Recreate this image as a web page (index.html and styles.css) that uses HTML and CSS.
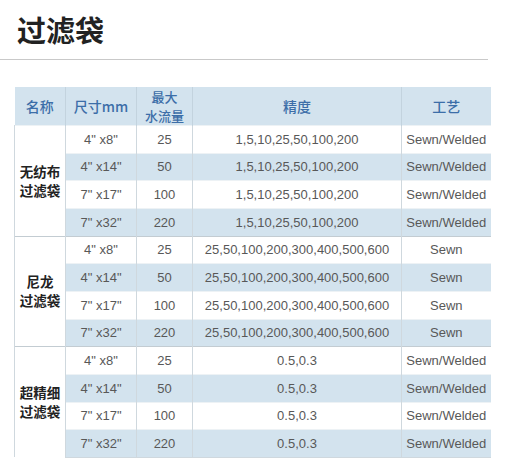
FILE: index.html
```html
<!DOCTYPE html>
<html lang="zh">
<head>
<meta charset="utf-8">
<link rel="stylesheet" href="styles.css">
</head>
<body>
<h1 class="title">过滤袋</h1>
<hr class="rule">
<table class="spec">
  <colgroup>
    <col class="c1"><col class="c2"><col class="c3"><col class="c4"><col class="c5">
  </colgroup>
  <thead>
    <tr><th>名称</th><th>尺寸mm</th><th class="two">最大<br>水流量</th><th>精度</th><th>工艺</th></tr>
  </thead>
  <tbody class="grp">
    <tr><td class="name" rowspan="4">无纺布<br>过滤袋</td><td>4" x8"</td><td>25</td><td>1,5,10,25,50,100,200</td><td>Sewn/Welded</td></tr>
    <tr class="alt"><td>4" x14"</td><td>50</td><td>1,5,10,25,50,100,200</td><td>Sewn/Welded</td></tr>
    <tr><td>7" x17"</td><td>100</td><td>1,5,10,25,50,100,200</td><td>Sewn/Welded</td></tr>
    <tr class="alt"><td>7" x32"</td><td>220</td><td>1,5,10,25,50,100,200</td><td>Sewn/Welded</td></tr>
  </tbody>
  <tbody class="grp">
    <tr><td class="name" rowspan="4">尼龙<br>过滤袋</td><td>4" x8"</td><td>25</td><td>25,50,100,200,300,400,500,600</td><td>Sewn</td></tr>
    <tr class="alt"><td>4" x14"</td><td>50</td><td>25,50,100,200,300,400,500,600</td><td>Sewn</td></tr>
    <tr><td>7" x17"</td><td>100</td><td>25,50,100,200,300,400,500,600</td><td>Sewn</td></tr>
    <tr class="alt"><td>7" x32"</td><td>220</td><td>25,50,100,200,300,400,500,600</td><td>Sewn</td></tr>
  </tbody>
  <tbody class="grp">
    <tr><td class="name" rowspan="4">超精细<br>过滤袋</td><td>4" x8"</td><td>25</td><td>0.5,0.3</td><td>Sewn/Welded</td></tr>
    <tr class="alt"><td>4" x14"</td><td>50</td><td>0.5,0.3</td><td>Sewn/Welded</td></tr>
    <tr><td>7" x17"</td><td>100</td><td>0.5,0.3</td><td>Sewn/Welded</td></tr>
    <tr class="alt"><td>7" x32"</td><td>220</td><td>0.5,0.3</td><td>Sewn/Welded</td></tr>
  </tbody>
</table>
</body>
</html>
```

FILE: styles.css
```css
html, body {
  margin: 0;
  padding: 0;
  background: #ffffff;
}
body {
  font-family: "Liberation Sans", "Noto Sans CJK SC", sans-serif;
  width: 525px;
  height: 470px;
  overflow: hidden;
}
.title {
  margin: 0;
  padding: 12px 0 0 17px;
  height: 36px;
  font-size: 29px;
  line-height: 34px;
  font-weight: 700;
  color: #222;
  font-family: "Noto Sans CJK SC", sans-serif;
}
.rule {
  margin: 11px 0 0 0;
  width: 488px;
  height: 0;
  border: 0;
  border-top: 1px solid #c9c9c9;
}
.spec {
  margin: 27px 0 0 14px;
  border-collapse: collapse;
  table-layout: fixed;
  width: 476px;
}
.c1 { width: 51px; }
.c2 { width: 71px; }
.c3 { width: 56px; }
.c4 { width: 209px; }
.c5 { width: 89px; }
.spec th {
  background: #d3e3ee;
  color: #3c6ea8;
  font-family: "Noto Sans CJK SC", sans-serif;
  font-weight: 500;
  font-size: 14px;
  line-height: 18px;
  height: 38px;
  padding: 0;
  text-align: center;
  border-left: 1px solid #c3d3de;
}
.spec th.two {
  font-size: 13px;
  line-height: 19px;
}
.spec th:first-child { border-left: 0; }
.spec td {
  height: 26.67px;
  padding: 0;
  text-align: center;
  font-size: 13px;
  line-height: 15px;
  color: #585858;
  border-left: 1px solid #cfd8de;
  border-top: 1px solid #edf2f5;
  white-space: nowrap;
}
.spec tr.alt td { background: #d3e3ee; }
.spec td.name {
  background: #fff;
  font-family: "Noto Sans CJK SC", sans-serif;
  font-weight: 700;
  font-size: 13.5px;
  line-height: 19px;
  color: #222;
  border-left: 1px solid #cfd8de;
}
.grp + .grp tr:first-child td { border-top: 1px solid #c3ccd2; }
.spec tbody.grp:last-child tr:last-child td { border-bottom: 1px solid #cfd8de; }
.spec tr td:last-child { border-right: 0; }
```
